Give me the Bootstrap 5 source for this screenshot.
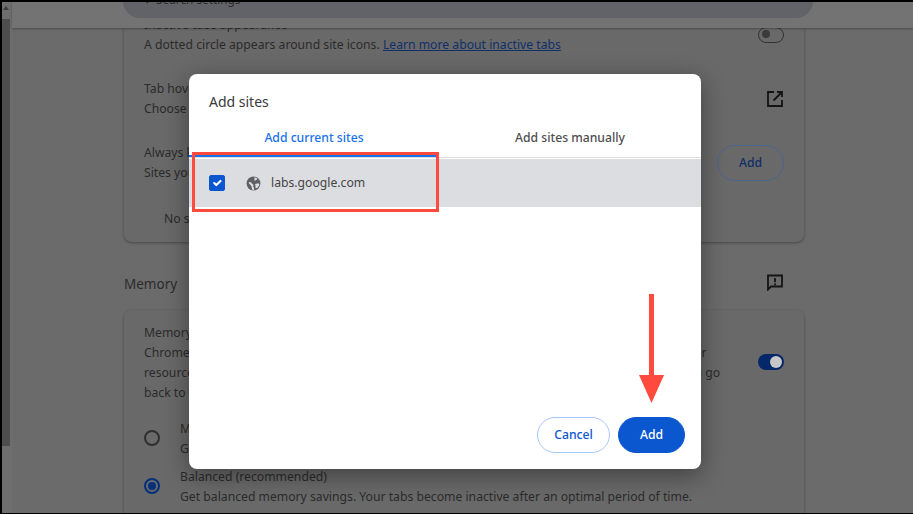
<!DOCTYPE html>
<html lang="en">
<head>
<meta charset="utf-8">
<title>Add sites</title>
<link href="https://cdn.jsdelivr.net/npm/bootstrap@5.3.0/dist/css/bootstrap.min.css" rel="stylesheet">
<style>
html,body{height:100%;margin:0;overflow:hidden}
body{background:#000;font-family:"Noto Sans","Open Sans",sans-serif;font-size:12.2px;line-height:20px;color:#2b2b2b}
.shot{position:relative;height:514px;padding:2px 0 1px 2px;overflow:hidden}
.screen{height:511px;background:#6b6b6b;overflow:hidden}
.rail{width:10px;flex:none;background:#6e6e6e}
.rail-top{height:17px;padding-top:4px}
.rail-arrow{display:block;margin-left:1px;width:0;height:0;border-left:3px solid transparent;border-right:3px solid transparent;border-bottom:4px solid #3f3f3f}
.rail-thumb{width:8px;height:427px;background:#4e4e4e}
.main{flex:1;min-width:0;position:relative}
.topbar{position:relative;z-index:2;height:26px;background:#737373;box-shadow:0 1px 2px rgba(0,0,0,.3)}
.searchbox{position:absolute;left:111px;width:690px;top:-18px;height:34px;border-radius:17px;background:#626368;padding:5px 0 0 33px;font-size:11.8px;color:#2b2b2b}
.searchbox svg{position:absolute;left:14px;top:8px}
.page{padding-left:112px;padding-right:109px;margin-top:-19px}
.panel{background:#696969;border-radius:8px;box-shadow:0 1px 3px rgba(0,0,0,.35);padding:0 20px}
.panel-one{height:233px;padding-top:6px}
.panel-two{height:300px;padding-top:13px}
.setrow{height:40px;margin-bottom:24px}
.tlink{color:#10306a;text-decoration:underline}
.sect{height:68px;padding:32px 20px 0 0;font-size:13.5px;color:#2b2b2b}
.sect svg{margin-top:-1px}
.tog{width:26px;height:16px;border-radius:8px;flex:none;padding:2px}
.tog-off{border:1px solid #333;padding:2px 3px}
.tog-off i{display:block;width:8px;height:8px;border-radius:50%;background:#3a3a3a}
.tog-on{background:#05286a;display:flex;justify-content:flex-end;margin-top:31px}
.tog-on i{display:block;width:12px;height:12px;border-radius:50%;background:#c8c8c8}
.ghostbtn{width:67px;height:36px;border:1px solid #4a6590;border-radius:18px;color:#0f2f66;font-weight:500;line-height:34px;text-align:center;flex:none}
.nosites{padding:2px 0 0 20px}
.rad{width:16px;height:16px;border-radius:50%;border:2px solid #2f2f2f;flex:none;margin-top:12px}
.rad-on{border-color:#05307a;padding:2px}
.rad-on i{display:block;width:8px;height:8px;border-radius:50%;background:#05307a}
.radrow{height:48px;padding-top:4px;gap:20px}
.radtext{margin-top:1px}
.mem-lines{height:91px;white-space:nowrap}
.dlg{position:absolute;left:189px;top:74px;width:512px;height:395px;background:#fff;border:0;border-radius:8px;box-shadow:0 6px 24px rgba(0,0,0,.4);z-index:3;overflow:hidden;color:#444}
.dlg-title{font-size:14px;line-height:20px;padding:18px 20px 0;height:46px;color:#3a3a3a}
.dlg-tabs{height:38px;border-bottom:1px solid #dcdcdc}
.dlg-tab{width:250px;text-align:center;font-weight:500;font-size:12.2px;line-height:36px;color:#4f4f4f;height:37px}
.dlg-tab-on{color:#1a73e8;border-bottom:2px solid #1a73e8}
.dlg-tab-rest{width:262px}
.siterow{margin-top:1px;height:48px;background:#dcdde1;padding-left:20px;color:#444}
.siterow .form-check-input{width:16px;height:16px;margin:0 21px 0 0;border-radius:2px;background-color:#0b57d0;border-color:#0b57d0;flex:none}
.globe{margin-right:10px;flex:none}
.dlg-foot{position:absolute;right:16px;bottom:16px;gap:8px}
.dbtn{height:36px;border-radius:18px;font-weight:500;font-size:12.2px;line-height:20px;padding:0}
.dbtn-c{width:73px;background:#fff;border:1px solid #a8c7fa;color:#0b57d0}
.dbtn-a{width:67px;background:#0b57d0;border:1px solid #0b57d0;color:#fff}
.redbox{position:absolute;left:192px;top:152px;width:247px;height:60px;border:3px solid #ff4a3d;z-index:4;pointer-events:none}
.redarrow{position:absolute;left:638px;top:294px;z-index:4}
</style>
</head>
<body>
<div class="shot">
  <div class="screen d-flex">
    <div class="rail">
      <div class="rail-top"><span class="rail-arrow"></span></div>
      <div class="rail-thumb"></div>
    </div>
    <div class="main">
      <div class="topbar">
        <div class="searchbox text-nowrap">
          <svg width="12" height="12" viewBox="0 0 24 24" fill="none" stroke="#2b2b2b" stroke-width="2.6"><circle cx="10" cy="10" r="7"/><path d="M15 15l7 7"/></svg>
          Search settings
        </div>
      </div>
      <div class="page">
        <div class="panel panel-one">
          <div class="setrow d-flex justify-content-between align-items-center">
            <div>Inactive tabs appearance<br>A dotted circle appears around site icons. <span class="tlink">Learn more about inactive tabs</span></div>
            <div class="tog tog-off"><i></i></div>
          </div>
          <div class="setrow d-flex justify-content-between align-items-center">
            <div>Tab hover<br>Choose</div>
            <svg width="18" height="18" viewBox="0 0 18 18" fill="none" stroke="#141414" stroke-width="1.8"><path d="M8 2H2v14h14v-6"/><path d="M11 2h5v5M16 2L7.500 10.500"/></svg>
          </div>
          <div class="setrow d-flex justify-content-between align-items-center">
            <div>Always keep active<br>Sites you add</div>
            <div class="ghostbtn">Add</div>
          </div>
          <div class="nosites">No sites added</div>
        </div>
        <div class="sect d-flex justify-content-between align-items-start">
          <span>Memory</span>
          <svg width="18" height="18" viewBox="0 0 18 18" fill="none" stroke="#141414" stroke-width="1.8"><path d="M2 2.500h14v11H5l-3 3z"/><path d="M9 5v4.200M9 10.600v1.600"/></svg>
        </div>
        <div class="panel panel-two">
          <div class="mem-lines d-flex justify-content-between">
            <div>Memory Saver<br>Chrome frees up memory from inactive tabs. This gives active tabs and other apps more computer<br>resources and keeps Chrome fast. Your inactive tabs automatically become active again when you go<br>back to them.</div>
            <div class="tog tog-on"><i></i></div>
          </div>
          <div class="radrow d-flex">
            <div class="rad"></div>
            <div class="radtext">Moderate<br>Get moderate savings.</div>
          </div>
          <div class="radrow d-flex">
            <div class="rad rad-on"><i></i></div>
            <div class="radtext">Balanced (recommended)<br>Get balanced memory savings. Your tabs become inactive after an optimal period of time.</div>
          </div>
        </div>
      </div>
    </div>
  </div>

  <div class="dlg card">
    <div class="dlg-title">Add sites</div>
    <div class="dlg-tabs d-flex">
      <div class="dlg-tab dlg-tab-on">Add current sites</div>
      <div class="dlg-tab dlg-tab-rest flex-grow-1">Add sites manually</div>
    </div>
    <div class="siterow d-flex align-items-center">
      <input class="form-check-input" type="checkbox" checked aria-label="labs.google.com">
      <svg class="globe" width="15" height="15" viewBox="0 0 16 16"><circle cx="8" cy="8" r="7.400" fill="#5f6064"/><path d="M4.500 6.200 8 9.500l-.4 1.600 1 1.700-.3 2.300-1.800-.6-.6-3.600-3.200-3.700zM9 1.400l3 .9-.6 1.800-2.300 1.300zM9.800 8.400l3.400-.6 1.300 1.500-2.500 3.500-1.700.2z" fill="#dcdde1"/></svg>
      <span>labs.google.com</span>
    </div>
    <div class="dlg-foot d-flex">
      <button type="button" class="btn dbtn dbtn-c">Cancel</button>
      <button type="button" class="btn dbtn dbtn-a">Add</button>
    </div>
  </div>

  <div class="redbox"></div>
  <svg class="redarrow" width="27" height="110" viewBox="0 0 27 110"><path d="M11 0h5v81h10l-12.500 28L1 81h10z" fill="#ff4a3d"/></svg>
</div>
</body>
</html>
